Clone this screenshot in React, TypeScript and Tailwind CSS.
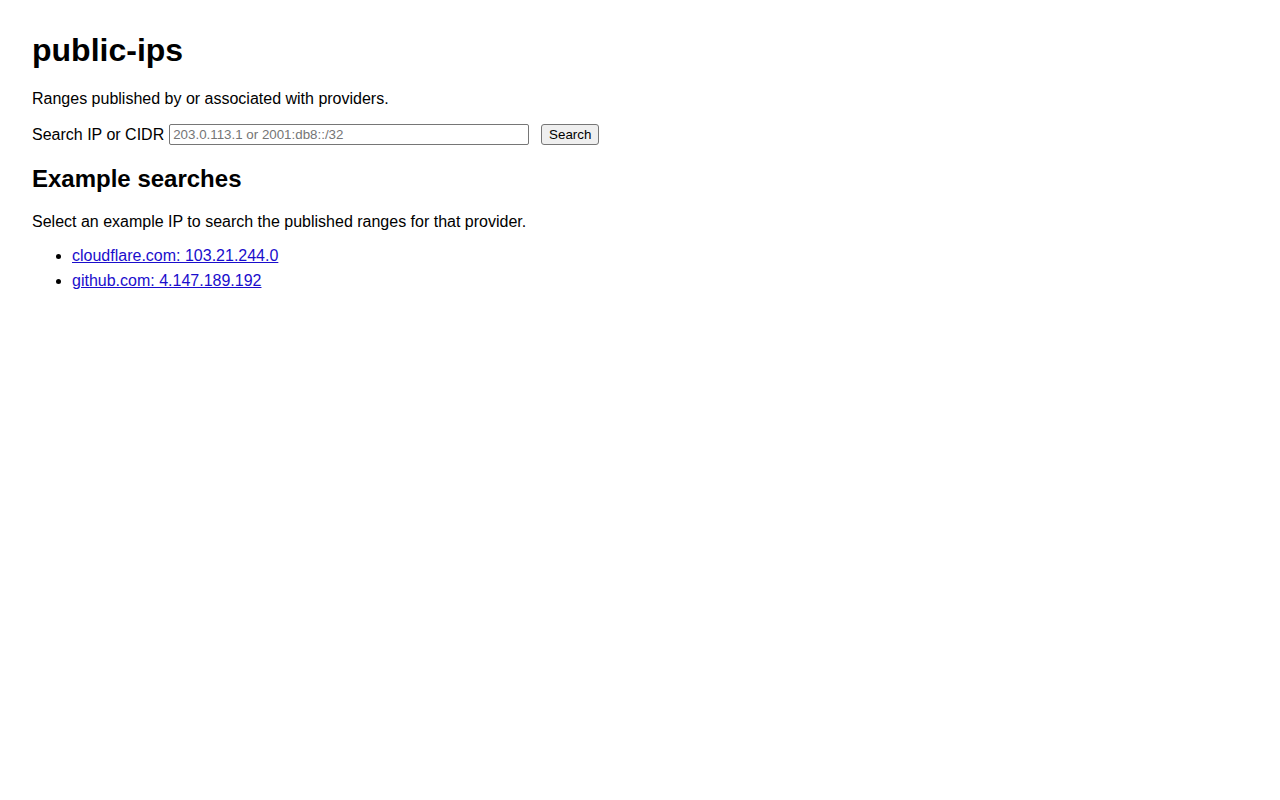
import React from "react";

export default function App() {
  const font = { fontFamily: '"Liberation Sans", Arial, sans-serif' };
  return (
    <div className="min-h-[800px] bg-white px-8 pt-8 text-black" style={font}>
      <h1 className="text-[32px] font-bold leading-[37px]">public-ips</h1>
      <p className="mt-[21px] text-[16px] leading-[18px]">
        Ranges published by or associated with providers.
      </p>
      <form
        className="mt-[16px] flex h-[21px] items-center"
        onSubmit={(e) => e.preventDefault()}
      >
        <label htmlFor="q" className="text-[16px] leading-[18px]">
          Search IP or CIDR
        </label>
        <input
          id="q"
          type="text"
          placeholder="203.0.113.1 or 2001:db8::/32"
          className="ml-[5px] h-[21px] w-[360px] rounded-[2px] border border-[#767676] bg-white px-[3px] text-[13.33px] leading-[15px] text-black outline-none placeholder:text-[#757575]"
          style={font}
        />
        <button
          type="submit"
          className="ml-[12px] h-[21px] w-[58px] rounded-[3px] border border-[#767676] bg-[#efefef] text-[13.33px] leading-[15px] text-black"
          style={font}
        >
          Search
        </button>
      </form>
      <h2 className="mt-[20px] text-[24px] font-bold leading-[28px]">
        Example searches
      </h2>
      <p className="mt-[20px] text-[16px] leading-[18px]">
        Select an example IP to search the published ranges for that provider.
      </p>
      <ul className="mt-[16px] list-disc pl-[40px] text-[16px] leading-[18px]">
        <li>
          <a href="#" className="text-[#1a0dcc] underline">
            cloudflare.com: 103.21.244.0
          </a>
        </li>
        <li className="mt-[7px]">
          <a href="#" className="text-[#1a0dcc] underline">
            github.com: 4.147.189.192
          </a>
        </li>
      </ul>
    </div>
  );
}
